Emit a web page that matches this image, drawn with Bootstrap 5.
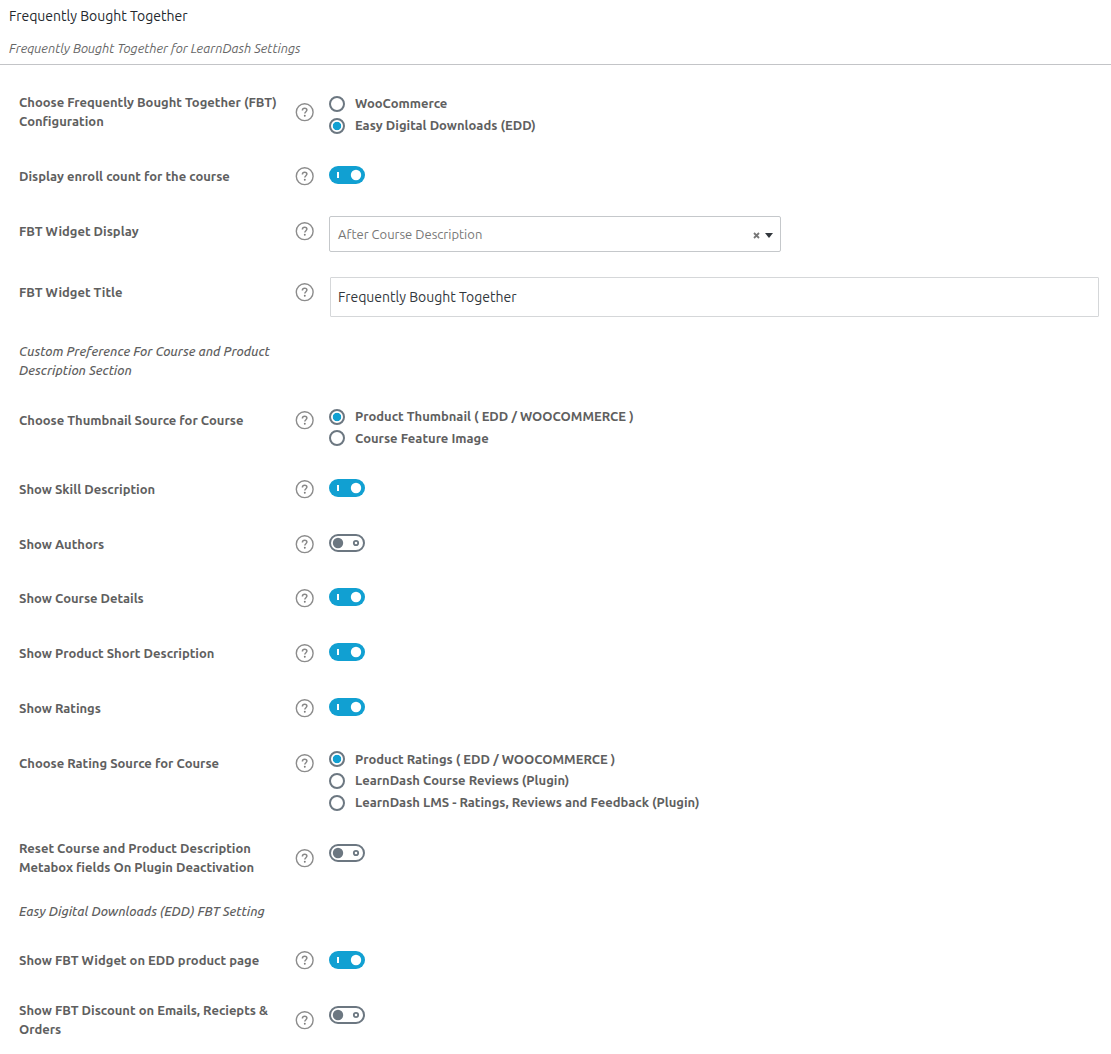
<!DOCTYPE html>
<html lang="en">
<head>
<meta charset="utf-8">
<meta name="viewport" content="width=device-width, initial-scale=1">
<title>Frequently Bought Together</title>
<link href="https://cdn.jsdelivr.net/npm/bootstrap@5.3.0/dist/css/bootstrap.min.css" rel="stylesheet">
<style>
body{font-family:Ubuntu,"Noto Sans","Open Sans",sans-serif;font-size:13px;line-height:19px;color:#5f5f5f;background:#fff;overflow-x:hidden}
.panel-head{height:65px;border-bottom:1px solid #c3c4c7;padding:6px 9px 0}
.panel-head h1{font-size:14px;line-height:20px;font-weight:400;color:#23282d;margin:0 0 13px}
.panel-head p{font-style:italic;color:#666;margin:0}
.settings{padding:20px 12px 0 19px}
.field-label{width:295px;padding-top:8px}
.field-name{width:262px;font-weight:600}
.field-note{font-style:italic;font-weight:500;width:262px;padding-top:8px}
.help{width:19px;height:19px;flex:none;margin-left:14px}
.h49{height:49px}.h50{height:50px}.h53{height:53px}.h54{height:54px}.h55{height:55px}.h59{height:59px}.h61{height:61px}.h63{height:63px}.h69{height:69px}.h74{height:74px}.h85{height:85px}
.field-ctl{padding-left:15px}
.up2{padding-top:2px}.up5{padding-top:5px}.up6{padding-top:5.6px}.up7{padding-top:7px}.up8{padding-top:8px}.up11{padding-top:11px}.up13{padding-top:13px}
.opt{height:21.8px;gap:10px;font-weight:600;line-height:15px}
.opt-low{line-height:17px}
.opt input{appearance:none;width:16px;height:16px;margin:0;border:2px solid #6c7781;border-radius:50%;background:#fff;flex:none}
.opt input:checked{background:radial-gradient(circle,#11a0d2 0 3.8px,#fff 4.6px)}
.toggle{display:block;width:36px;height:18px}
.pick{width:452px;height:36px;border:1px solid #c5c8cb;border-radius:2px;padding:0 7px 0 8px;color:#777}
.title-input{width:769px;height:40px;border:1px solid #d5d7d9;border-radius:1px;margin-left:1px;padding:0 7px;font-size:14px;color:#32373c}
</style>
</head>
<body>
<svg width="0" height="0" class="d-none">
<symbol id="q" viewBox="0 0 19 19"><circle cx="9.7" cy="9.2" r="8.400" fill="none" stroke="#8c8c8c" stroke-width="1.4"/><path d="M7.4 7.4c0-1.4 1-2.2 2.3-2.2s2.2.8 2.2 1.9c0 1.6-2.1 1.700-2.1 3.500" fill="none" stroke="#888" stroke-width="1.5"/><circle cx="9.800" cy="12.800" r=".95" fill="#7c7c7c"/></symbol>
<symbol id="on" viewBox="0 0 36 18"><rect width="36" height="18" rx="9" fill="#11a0d2"/><path d="M8 6h2v6H8z" fill="#fff"/><circle cx="27" cy="9" r="5.2" fill="#fff"/></symbol>
<symbol id="off" viewBox="0 0 36 18"><rect x="1" y="1" width="34" height="16" rx="8" fill="#fff" stroke="#6c7781" stroke-width="2"/><circle cx="9" cy="9" r="5.2" fill="#6c7781"/><circle cx="27" cy="9" r="2.2" fill="none" stroke="#6c7781" stroke-width="1.8"/></symbol>
</svg>
<header class="panel-head"><h1><span>Frequently Bought Together</span></h1><p><span>Frequently Bought Together for LearnDash Settings</span></p></header>
<main class="settings">
<div class="d-flex align-items-start h74"><div class="field-label d-flex align-items-center"><div class="field-name">Choose Frequently Bought Together (FBT) Configuration</div><svg class="help"><use href="#q"/></svg></div>
<div class="field-ctl up11"><label class="opt d-flex"><input type="radio" name="cfg"><span>WooCommerce</span></label><label class="opt d-flex"><input type="radio" name="cfg" checked><span>Easy Digital Downloads (EDD)</span></label></div></div>
<div class="d-flex align-items-start h55"><div class="field-label d-flex align-items-center"><div class="field-name">Display enroll count for the course</div><svg class="help"><use href="#q"/></svg></div><div class="field-ctl up7"><svg class="toggle"><use href="#on"/></svg></div></div>
<div class="d-flex align-items-start h61"><div class="field-label d-flex align-items-center"><div class="field-name">FBT Widget Display</div><svg class="help"><use href="#q"/></svg></div>
<div class="field-ctl up2"><div class="pick d-flex align-items-center"><span class="flex-grow-1">After Course Description</span><svg width="20" height="10"><path d="M1 4l5 5M6 4L1 9" stroke="#777" stroke-width="1.8"/><path d="M12 4h8l-4 5z" fill="#32373c"/></svg></div></div></div>
<div class="d-flex align-items-start h59"><div class="field-label d-flex align-items-center"><div class="field-name">FBT Widget Title</div><svg class="help"><use href="#q"/></svg></div><div class="field-ctl up2"><input class="title-input d-block" type="text" value="Frequently Bought Together"></div></div>
<div class="h69"><div class="field-note">Custom Preference For Course and Product Description Section</div></div>
<div class="d-flex align-items-start h69"><div class="field-label d-flex align-items-center"><div class="field-name">Choose Thumbnail Source for Course</div><svg class="help"><use href="#q"/></svg></div>
<div class="field-ctl up6"><label class="opt d-flex"><input type="radio" name="thumb" checked><span>Product Thumbnail ( EDD / WOOCOMMERCE )</span></label><label class="opt opt-low d-flex"><input type="radio" name="thumb"><span>Course Feature Image</span></label></div></div>
<div class="d-flex align-items-start h55"><div class="field-label d-flex align-items-center"><div class="field-name">Show Skill Description</div><svg class="help"><use href="#q"/></svg></div><div class="field-ctl up7"><svg class="toggle"><use href="#on"/></svg></div></div>
<div class="d-flex align-items-start h54"><div class="field-label d-flex align-items-center"><div class="field-name">Show Authors</div><svg class="help"><use href="#q"/></svg></div><div class="field-ctl up7"><svg class="toggle"><use href="#off"/></svg></div></div>
<div class="d-flex align-items-start h55"><div class="field-label d-flex align-items-center"><div class="field-name">Show Course Details</div><svg class="help"><use href="#q"/></svg></div><div class="field-ctl up7"><svg class="toggle"><use href="#on"/></svg></div></div>
<div class="d-flex align-items-start h55"><div class="field-label d-flex align-items-center"><div class="field-name">Show Product Short Description</div><svg class="help"><use href="#q"/></svg></div><div class="field-ctl up7"><svg class="toggle"><use href="#on"/></svg></div></div>
<div class="d-flex align-items-start h55"><div class="field-label d-flex align-items-center"><div class="field-name">Show Ratings</div><svg class="help"><use href="#q"/></svg></div><div class="field-ctl up7"><svg class="toggle"><use href="#on"/></svg></div></div>
<div class="d-flex align-items-start h85"><div class="field-label d-flex align-items-center"><div class="field-name">Choose Rating Source for Course</div><svg class="help"><use href="#q"/></svg></div>
<div class="field-ctl up5"><label class="opt opt-low d-flex"><input type="radio" name="rate" checked><span>Product Ratings ( EDD / WOOCOMMERCE )</span></label><label class="opt d-flex"><input type="radio" name="rate"><span>LearnDash Course Reviews (Plugin)</span></label><label class="opt d-flex"><input type="radio" name="rate"><span>LearnDash LMS - Ratings, Reviews and Feedback (Plugin)</span></label></div></div>
<div class="d-flex align-items-start h63"><div class="field-label d-flex align-items-center"><div class="field-name">Reset Course and Product Description Metabox fields On Plugin Deactivation</div><svg class="help"><use href="#q"/></svg></div><div class="field-ctl up13"><svg class="toggle"><use href="#off"/></svg></div></div>
<div class="h49"><div class="field-note">Easy Digital Downloads (EDD) FBT Setting</div></div>
<div class="d-flex align-items-start h50"><div class="field-label d-flex align-items-center"><div class="field-name">Show FBT Widget on EDD product page</div><svg class="help"><use href="#q"/></svg></div><div class="field-ctl up8"><svg class="toggle"><use href="#on"/></svg></div></div>
<div class="d-flex align-items-start h53"><div class="field-label d-flex align-items-center"><div class="field-name">Show FBT Discount on Emails, Reciepts &amp; Orders</div><svg class="help"><use href="#q"/></svg></div><div class="field-ctl up13"><svg class="toggle"><use href="#off"/></svg></div></div>
</main>
<script src="https://cdn.jsdelivr.net/npm/bootstrap@5.3.0/dist/js/bootstrap.bundle.min.js"></script>
</body>
</html>
